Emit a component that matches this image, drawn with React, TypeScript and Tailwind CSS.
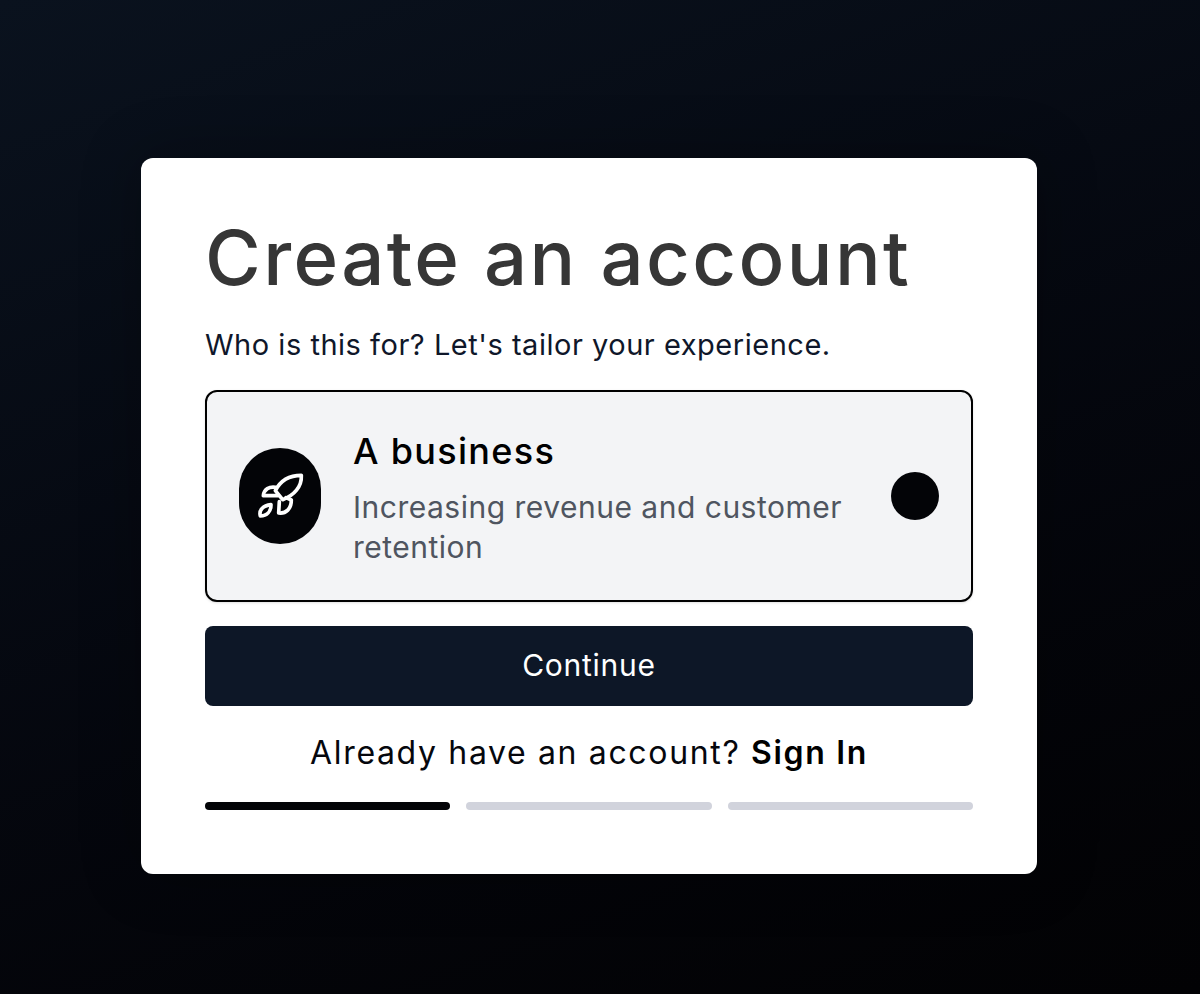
export default function App() {
  return (
    <div className="min-h-screen bg-linear-160 from-[#0a121e] to-[#020204] pt-[158px] pl-[141px] pb-[120px] font-['Inter',sans-serif]">
      <div className="w-[896px] h-[716px] bg-white rounded-xl px-16 pt-[51px] shadow-[0_0_60px_rgba(0,0,0,0.3)]">
        <h1 className="text-[76px] leading-[96px] font-medium tracking-[2.4px] text-[#363636]">Create an account</h1>
        <p className="mt-5 text-[29px] leading-[40px] tracking-[0.52px] text-[#0f172a]">Who is this for? Let's tailor your experience.</p>

        <div className="mt-[25px] h-[212px] flex items-center border-2 border-black rounded-xl bg-gray-100 pl-8 pr-8 shadow-sm">
          <div className="w-[82px] h-[96px] rounded-full bg-[#030407] flex items-center justify-center shrink-0">
            <svg width="50" height="50" viewBox="45 63 150 150" fill="none" stroke="white" strokeWidth="11" strokeLinejoin="round" strokeLinecap="round">
              <path d="M184 76C150 76 122 90 106 122L128 149C162 136 186 110 184 76Z" />
              <path d="M107 112C88 109 72 117 70 137L113 137" />
              <path d="M118 155L116 189C138 192 154 176 154 150L138 143" />
              <path d="M61 198C56 180 69 167 93 164C93 184 81 198 61 198Z" />
            </svg>
          </div>
          <div className="ml-8 flex-1 pt-[6px]">
            <div className="text-[36px] leading-[40px] font-medium tracking-[1.3px] text-black">A business</div>
            <div className="mt-4 text-[30px] leading-[40px] tracking-[0.5px] text-[#4f5560]">
              Increasing revenue and customer
              <br />
              retention
            </div>
          </div>
          <div className="w-12 h-12 rounded-full bg-[#030407] shrink-0" />
        </div>

        <button className="mt-6 w-full h-20 pb-[2px] rounded-lg bg-[#0d1727] text-white text-[30px] tracking-[0.75px] font-normal">Continue</button>

        <p className="mt-[27px] text-center text-[32px] leading-[40px] tracking-[1.65px] text-[#05070d]">
          Already have an account? <span className="font-semibold text-black">Sign In</span>
        </p>

        <div className="mt-[29px] flex gap-4">
          <div className="flex-1 h-2 rounded-full bg-[#030407]" />
          <div className="flex-1 h-2 rounded-full bg-[#d1d3dc]" />
          <div className="flex-1 h-2 rounded-full bg-[#d1d3dc]" />
        </div>
      </div>
    </div>
  );
}
